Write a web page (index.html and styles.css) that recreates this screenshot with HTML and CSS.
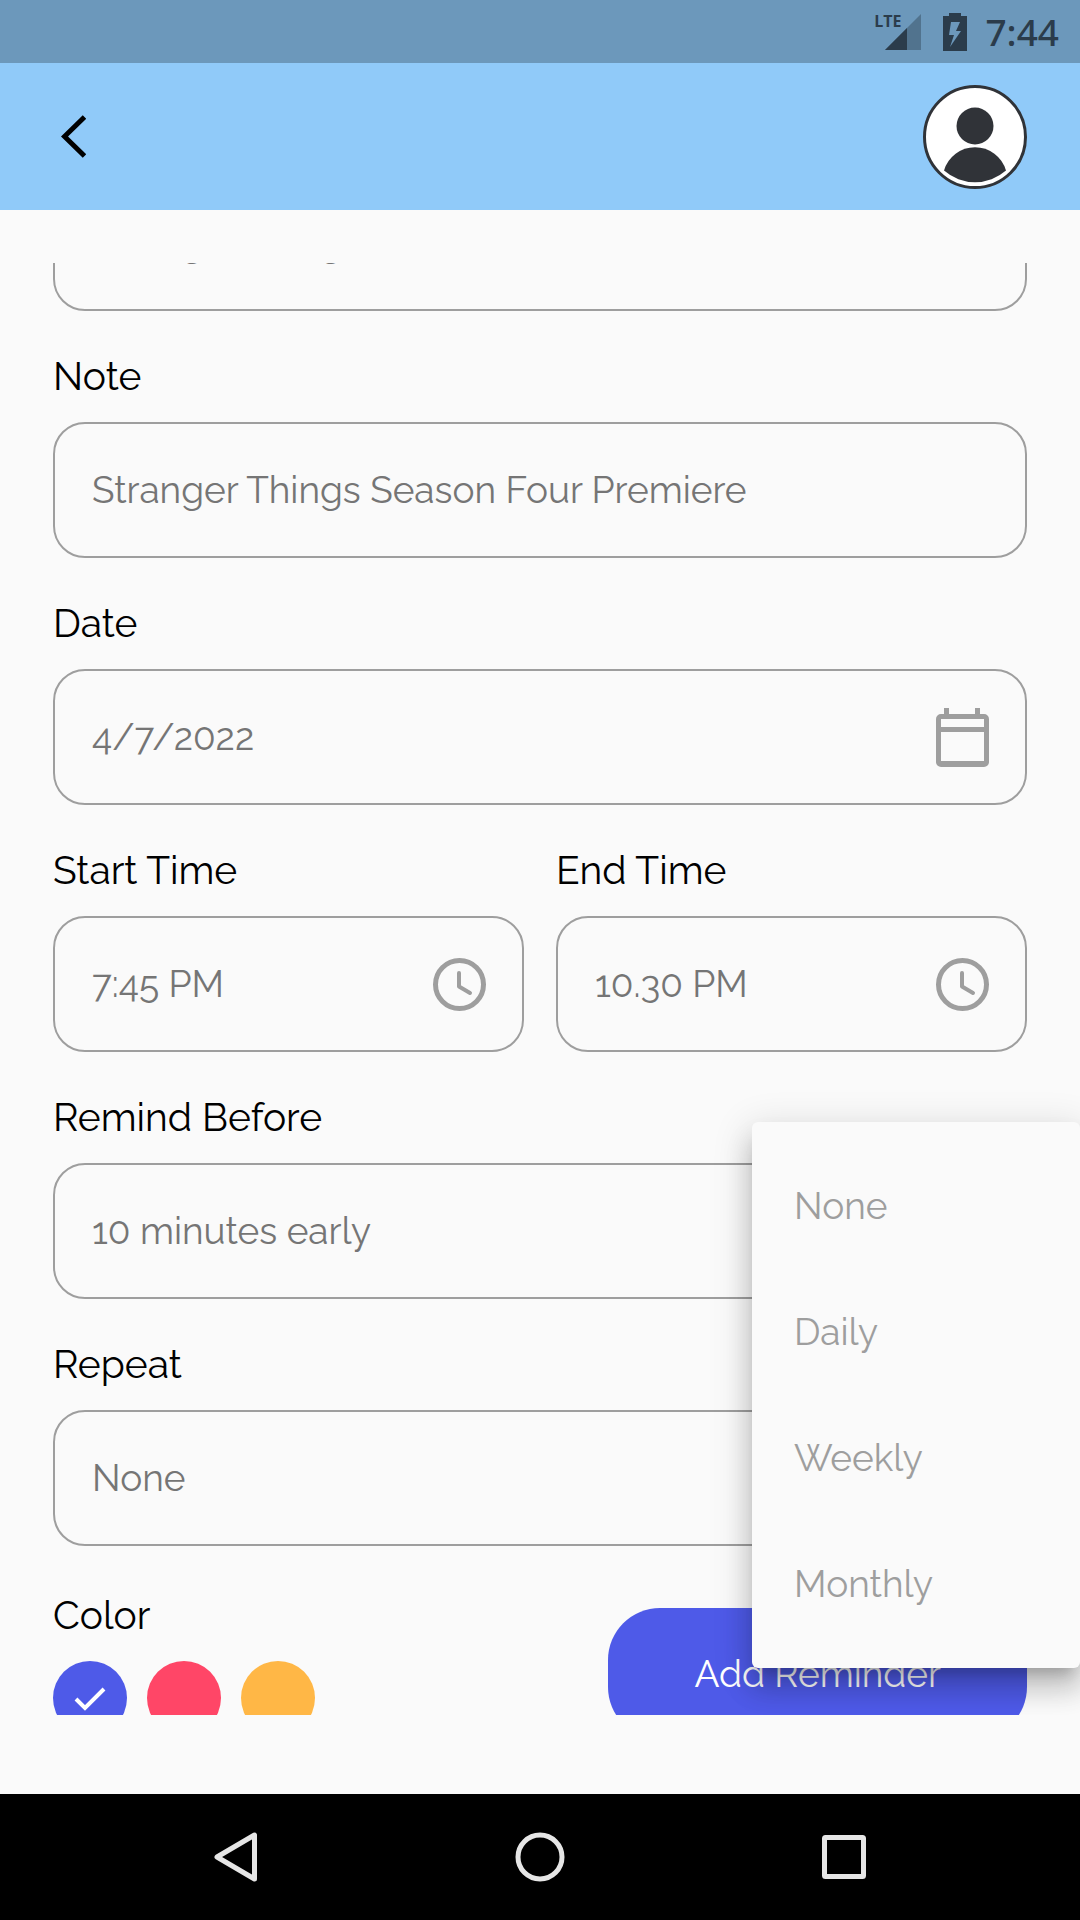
FILE: index.html
```html
<!DOCTYPE html>
<html lang="en">
<head>
<meta charset="utf-8">
<meta name="viewport" content="width=device-width, initial-scale=1">
<title>Add Reminder</title>
<link rel="stylesheet" href="styles.css">
</head>
<body>
<div class="app">
  <div class="status-bar">
    <div class="signal">
      <span class="signal-label">LTE</span>
      <svg class="signal-icon" viewBox="0 0 36 36" aria-hidden="true"><path d="M0 36L36 0V36Z" opacity=".4"/><path d="M0 36L22 14V36Z"/></svg>
    </div>
    <svg class="battery-icon" viewBox="0 0 24 38" aria-hidden="true"><path fill-rule="evenodd" d="M6 0H18V3H24V38H0V3H6ZM8 9L6 22H11L7 34L18 18H13L17 9Z"/></svg>
    <span class="clock">7:44</span>
  </div>

  <header class="app-bar">
    <button class="back" type="button" aria-label="Back">
      <svg viewBox="0 0 25 43" aria-hidden="true"><path d="M23.500 2L3.500 21.500L23.500 41" fill="none" stroke="#000" stroke-width="5"/></svg>
    </button>
    <button class="avatar" type="button" aria-label="Profile">
      <svg viewBox="0 0 104 104" aria-hidden="true">
        <circle cx="52" cy="52" r="50.500" fill="#fff" stroke="#303338" stroke-width="3"/>
        <circle cx="52" cy="41" r="18.500" fill="#303338"/>
        <path d="M21 85.500A32.300 32.300 0 0 1 83 85.500A47 47 0 0 1 21 85.500Z" fill="#303338"/>
      </svg>
    </button>
  </header>

  <main class="content">
    <div class="scroller">
      <form class="form">
        <div class="field">
          <div class="box"><input class="control" id="title" type="text" value="Stranger Things" aria-label="Title"></div>
        </div>
        <div class="field">
          <label class="label" for="note">Note</label>
          <div class="box"><input class="control" id="note" type="text" value="Stranger Things Season Four Premiere"></div>
        </div>
        <div class="field">
          <label class="label" for="date">Date</label>
          <div class="box">
            <input class="control" id="date" type="text" value="4/7/2022">
            <button class="picker" type="button" aria-label="Pick date">
              <svg viewBox="0 0 53 59" aria-hidden="true"><path fill-rule="evenodd" d="M5 6H8V0H13V6H39V0H44V6H48A5 5 0 0 1 53 11V54A5 5 0 0 1 48 59H5A5 5 0 0 1 0 54V11A5 5 0 0 1 5 6ZM5 11V19H48V11ZM5 24V53H48V24Z"/></svg>
            </button>
          </div>
        </div>
        <div class="field-row">
          <div class="field">
            <label class="label" for="start">Start Time</label>
            <div class="box">
              <input class="control" id="start" type="text" value="7:45 PM">
              <button class="picker" type="button" aria-label="Pick start time">
                <svg viewBox="0 0 53 53" aria-hidden="true"><circle cx="26.500" cy="26.500" r="24" fill="none" stroke="#9e9e9e" stroke-width="5"/><path d="M26 15V28.500L37 35" fill="none" stroke="#9e9e9e" stroke-width="4" stroke-linecap="round" stroke-linejoin="round"/></svg>
              </button>
            </div>
          </div>
          <div class="field">
            <label class="label" for="end">End Time</label>
            <div class="box">
              <input class="control" id="end" type="text" value="10.30 PM">
              <button class="picker" type="button" aria-label="Pick end time">
                <svg viewBox="0 0 53 53" aria-hidden="true"><circle cx="26.500" cy="26.500" r="24" fill="none" stroke="#9e9e9e" stroke-width="5"/><path d="M26 15V28.500L37 35" fill="none" stroke="#9e9e9e" stroke-width="4" stroke-linecap="round" stroke-linejoin="round"/></svg>
              </button>
            </div>
          </div>
        </div>
        <div class="field">
          <label class="label" for="remind">Remind Before</label>
          <div class="box"><select class="control" id="remind"><option>10 minutes early</option></select></div>
        </div>
        <div class="field">
          <label class="label" for="repeat">Repeat</label>
          <div class="box"><select class="control" id="repeat"><option>None</option><option>Daily</option><option>Weekly</option><option>Monthly</option></select></div>
        </div>
        <div class="actions">
          <fieldset class="colors">
            <legend class="label">Color</legend>
            <div class="swatches">
              <label class="swatch"><input class="swatch-input blue" type="radio" name="color" aria-label="Blue" checked>
                <svg class="check" viewBox="0 0 74 74" aria-hidden="true"><path d="M23 38L32 47L51 28" fill="none" stroke="#fff" stroke-width="4"/></svg></label>
              <label class="swatch"><input class="swatch-input pink" type="radio" name="color" aria-label="Pink"></label>
              <label class="swatch"><input class="swatch-input yellow" type="radio" name="color" aria-label="Yellow"></label>
            </div>
          </fieldset>
          <button class="submit" type="button">Add Reminder</button>
        </div>
      </form>
    </div>

    <ul class="menu" aria-label="Repeat">
      <li><button class="menu-item" type="button">None</button></li>
      <li><button class="menu-item" type="button">Daily</button></li>
      <li><button class="menu-item" type="button">Weekly</button></li>
      <li><button class="menu-item" type="button">Monthly</button></li>
    </ul>
  </main>

  <nav class="nav-bar" aria-label="System">
    <button class="nav-button" type="button" aria-label="Back"><svg viewBox="0 0 50 50" aria-hidden="true"><path d="M43.500 3V47L6 25Z"/></svg></button>
    <button class="nav-button" type="button" aria-label="Home"><svg viewBox="0 0 50 50" aria-hidden="true"><circle cx="25" cy="25" r="22"/></svg></button>
    <button class="nav-button" type="button" aria-label="Recents"><svg viewBox="0 0 50 50" aria-hidden="true"><rect x="5.500" y="5.500" width="39" height="39" rx="1"/></svg></button>
  </nav>
</div>
</body>
</html>
```

FILE: styles.css
```css
* {
  box-sizing: border-box;
}

body {
  margin: 0;
  background: #fafafa;
  font-family: Raleway, Lato, "Open Sans", sans-serif;
  font-size: 37px;
  color: #000;
}

button {
  padding: 0;
  border: 0;
  background: none;
  color: inherit;
  font: inherit;
}

svg {
  display: block;
}

.app {
  display: flex;
  flex-direction: column;
  height: 100vh;
}

/* System status bar */
.status-bar {
  display: flex;
  align-items: center;
  justify-content: flex-end;
  gap: 18px;
  height: 63px;
  padding-right: 21px;
  background: #6c98bb;
  color: #2b3c4b;
  fill: #2b3c4b;
}

.signal {
  display: flex;
  position: relative;
  margin-right: 4px;
}

.signal-label {
  position: absolute;
  top: -3px;
  right: 20px;
  font: 700 16px/20px "Open Sans", sans-serif;
}

.signal-icon {
  width: 36px;
  height: 36px;
}

.battery-icon {
  width: 24px;
  height: 38px;
}

.clock {
  font: 500 37px/48px "Noto Sans", sans-serif;
}

/* App bar */
.app-bar {
  display: flex;
  align-items: center;
  justify-content: space-between;
  height: 147px;
  padding: 0 53px 0 61px;
  background: #90caf9;
}

.back svg {
  width: 25px;
  height: 43px;
}

.avatar svg {
  width: 104px;
  height: 104px;
}

/* Form */
.content {
  display: flex;
  flex: 1;
  min-height: 0;
  position: relative;
  padding: 53px 53px 79px;
}

.scroller {
  flex: 1;
  min-width: 0;
  overflow: hidden;
}

/* The list is scrolled most of the way past its first field. */
.form {
  margin-top: -88px;
}

.field {
  display: flex;
  flex-direction: column;
  min-width: 0;
}

.field-row {
  display: grid;
  grid-template-columns: 1fr 1fr;
  gap: 32px;
}

.label {
  margin: 42px 0 23px;
  padding: 0;
  font-size: 39px;
  line-height: 46px;
}

.box {
  display: flex;
  align-items: center;
  height: 136px;
  padding: 0 36px 0 37px;
  border: 2px solid #9e9e9e;
  border-radius: 32px;
}

.control {
  flex: 1;
  min-width: 0;
  margin: 0;
  padding: 0;
  border: 0;
  outline: 0;
  appearance: none;
  background: none;
  color: #757575;
  font: inherit;
  line-height: 48px;
}

.picker svg {
  width: 53px;
  fill: #9e9e9e;
}

/* Color choice and submit */
.actions {
  display: flex;
  align-items: flex-start;
  justify-content: space-between;
}

.colors {
  margin: 46px 0 0;
  padding: 0;
  border: 0;
}

.swatches {
  display: flex;
  gap: 20px;
}

.swatch {
  display: block;
  position: relative;
}

.swatch-input {
  display: block;
  width: 74px;
  height: 74px;
  margin: 0;
  appearance: none;
  border-radius: 50%;
}

.blue {
  background: #4e5ae8;
}

.pink {
  background: #ff4667;
}

.yellow {
  background: #ffb746;
}

.check {
  position: absolute;
  inset: 0;
}

.submit {
  height: 131px;
  margin-top: 62px;
  padding: 0 86px;
  border-radius: 52px;
  background: #4e5ae8;
  color: #fff;
}

/* Open drop-down menu */
.menu {
  position: absolute;
  right: 0;
  bottom: 126px;
  width: 328px;
  margin: 0;
  padding: 21px 0;
  border-radius: 6px;
  background: #fafafa;
  box-shadow: 0 13px 13px -8px rgba(0, 0, 0, .2), 0 21px 26px 3px rgba(0, 0, 0, .14), 0 8px 37px 5px rgba(0, 0, 0, .12);
  list-style: none;
}

.menu-item {
  display: block;
  width: 100%;
  height: 126px;
  padding: 0 42px;
  color: #9e9e9e;
  text-align: left;
}

/* System navigation */
.nav-bar {
  display: grid;
  grid-template-columns: repeat(3, 1fr);
  height: 126px;
  padding: 0 84px;
  background: #000;
  position: relative;
}

.nav-button {
  display: flex;
  align-items: center;
  justify-content: center;
}

.nav-button svg {
  width: 50px;
  height: 50px;
  fill: none;
  stroke: #e6e6e6;
  stroke-width: 5;
  stroke-linejoin: round;
}
```
